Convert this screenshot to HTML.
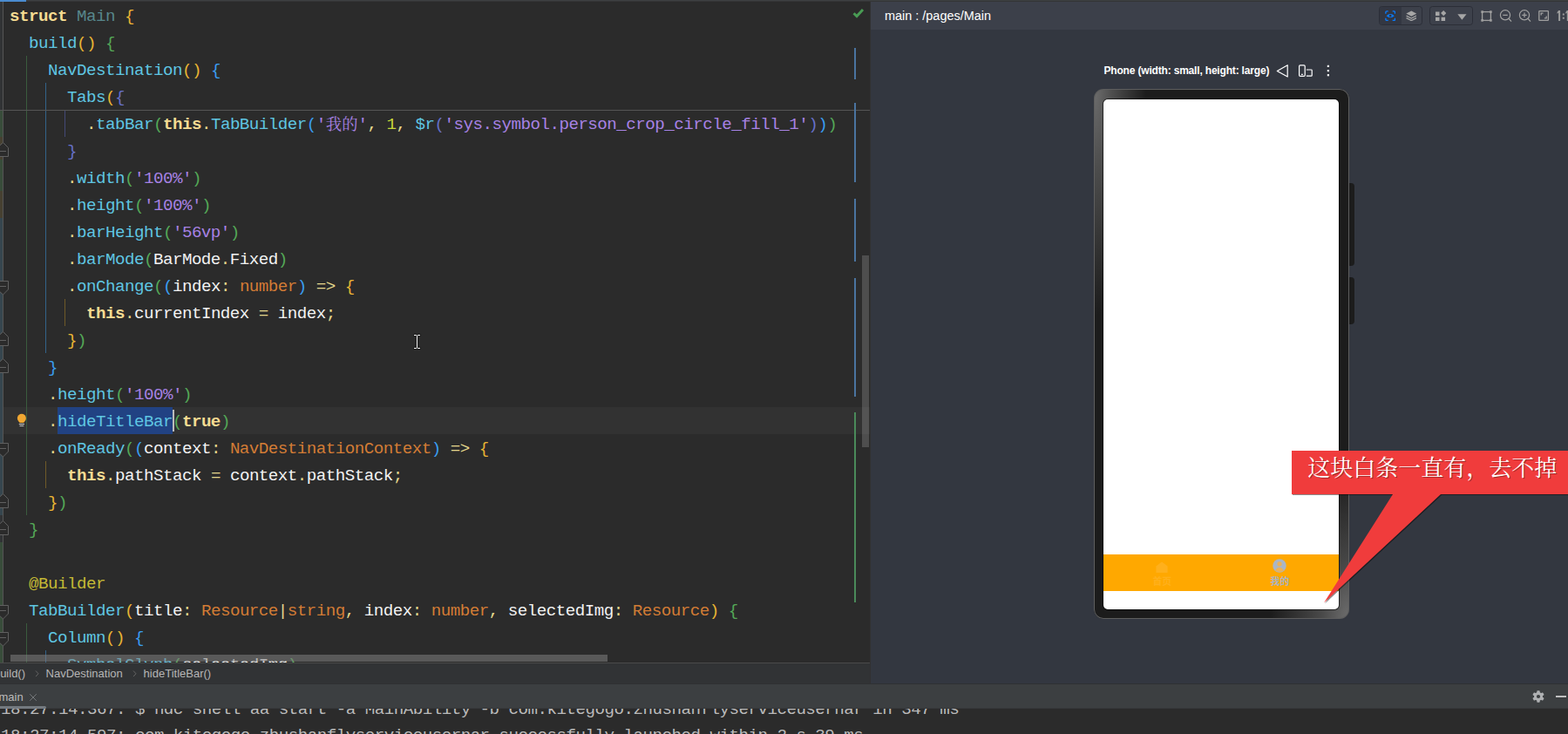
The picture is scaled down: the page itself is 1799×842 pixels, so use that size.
<!DOCTYPE html>
<html><head><meta charset="utf-8"><title>DevEco Studio</title>
<style>
html,body{margin:0;padding:0;}
body{width:1799px;height:842px;overflow:hidden;background:#2b2b2b;position:relative;font-family:"Liberation Sans",sans-serif;}
.abs{position:absolute}
#editor{position:absolute;left:0;top:0;width:998px;height:760px;background:#2b2b2b;overflow:hidden}
.ln{position:absolute;left:11px;height:31px;line-height:31px;white-space:pre;font-family:"Liberation Mono",monospace;font-size:19.2px;color:#cfcfcf;letter-spacing:-0.5219px}
.k{color:#f6dc92;font-weight:bold}
.i{color:#5fc6e2}
.w{color:#f2f2f2}
.t{color:#d37c35}
.s{color:#a782e4}
.n{color:#c6d83a}
.o{color:#e6d88c}
.d{color:#e6d88c}
.u{color:#57878c}
.a{color:#c4ba35}
.b1{color:#e8b434}
.b2{color:#54a857}
.b3{color:#3a9df0}
.b4{color:#6670c8}
.cj{display:inline-block;position:relative;width:36.67px;height:31px;vertical-align:top;overflow:visible;font-family:"Liberation Serif","Noto Serif CJK SC",serif;font-size:18.33px;letter-spacing:0;line-height:31px;color:#a782e4;white-space:pre}
#right{position:absolute;left:999px;top:2px;width:800px;height:782px;background:#333740;overflow:hidden}
</style></head><body>
<div id="editor">
  <div class="abs" style="left:0;top:0;width:3px;height:760px;background:#313335"></div>
  <div style="position:absolute;left:0;top:127px;width:3px;height:30px;background:#384d3a"></div><div style="position:absolute;left:0;top:157px;width:3px;height:26px;background:#474131"></div><div style="position:absolute;left:0;top:183px;width:3px;height:36px;background:#384d3a"></div><div style="position:absolute;left:0;top:219px;width:3px;height:31px;background:#474131"></div><div style="position:absolute;left:0;top:250px;width:3px;height:341px;background:#36464f"></div><div style="position:absolute;left:0;top:622px;width:3px;height:138px;background:#384d3a"></div>
  <div class="abs" style="left:3px;top:0;width:1px;height:760px;background:#555"></div>
  <div class="abs" style="left:4px;top:467px;width:994px;height:31px;background:#323232"></div>
  <div class="abs" style="left:66px;top:467px;width:132px;height:31px;background:#214283"></div>
  <div style="position:absolute;left:30px;top:64px;width:1px;height:527px;background:#3a5c3e"></div><div style="position:absolute;left:52px;top:95px;width:1px;height:310px;background:#33638a"></div><div style="position:absolute;left:74px;top:127px;width:1px;height:30px;background:#434977"></div><div style="position:absolute;left:74px;top:343px;width:1px;height:31px;background:#6e5a28"></div><div style="position:absolute;left:52px;top:529px;width:1px;height:31px;background:#6e5a28"></div><div style="position:absolute;left:30px;top:715px;width:1px;height:45px;background:#3a5c3e"></div><div style="position:absolute;left:52px;top:746px;width:1px;height:14px;background:#33638a"></div>
  <div class="abs" style="left:0;top:126px;width:998px;height:1px;background:#555"></div>
  <div class="ln" style="top:4.4px"><span class="k">struct</span><span class="d"> </span><span class="u">Main</span><span class="d"> </span><span class="b1">{</span></div>
<div class="ln" style="top:35.4px"><span class="d">  </span><span class="i">build</span><span class="b1">()</span><span class="d"> </span><span class="b2">{</span></div>
<div class="ln" style="top:66.4px"><span class="d">    </span><span class="i">NavDestination</span><span class="b1">()</span><span class="d"> </span><span class="b3">{</span></div>
<div class="ln" style="top:97.4px"><span class="d">      </span><span class="i">Tabs</span><span class="b1">(</span><span class="b4">{</span></div>
<div class="ln" style="top:128.4px"><span class="d">        .</span><span class="i">tabBar</span><span class="b2">(</span><span class="k">this</span><span class="d">.</span><span class="i">TabBuilder</span><span class="b3">(</span><span class="s">&#x27;</span><span class="cj">我的</span><span class="s">&#x27;</span><span class="o">,</span><span class="d"> </span><span class="n">1</span><span class="o">,</span><span class="d"> </span><span class="i">$r</span><span class="b4">(</span><span class="s">&#x27;sys.symbol.person_crop_circle_fill_1&#x27;</span><span class="b4">)</span><span class="b3">)</span><span class="b2">)</span></div>
<div class="ln" style="top:159.4px"><span class="d">      </span><span class="b4">}</span></div>
<div class="ln" style="top:190.4px"><span class="d">      .</span><span class="i">width</span><span class="b2">(</span><span class="s">&#x27;100%&#x27;</span><span class="b2">)</span></div>
<div class="ln" style="top:221.4px"><span class="d">      .</span><span class="i">height</span><span class="b2">(</span><span class="s">&#x27;100%&#x27;</span><span class="b2">)</span></div>
<div class="ln" style="top:252.4px"><span class="d">      .</span><span class="i">barHeight</span><span class="b2">(</span><span class="s">&#x27;56vp&#x27;</span><span class="b2">)</span></div>
<div class="ln" style="top:283.4px"><span class="d">      .</span><span class="i">barMode</span><span class="b2">(</span><span class="w">BarMode</span><span class="o">.</span><span class="w">Fixed</span><span class="b2">)</span></div>
<div class="ln" style="top:314.4px"><span class="d">      .</span><span class="i">onChange</span><span class="b2">(</span><span class="b3">(</span><span class="w">index</span><span class="o">:</span><span class="d"> </span><span class="t">number</span><span class="b3">)</span><span class="d"> </span><span class="o">=&gt;</span><span class="d"> </span><span class="b1">{</span></div>
<div class="ln" style="top:345.4px"><span class="d">        </span><span class="k">this</span><span class="o">.</span><span class="w">currentIndex</span><span class="d"> </span><span class="o">=</span><span class="d"> </span><span class="w">index</span><span class="o">;</span></div>
<div class="ln" style="top:376.4px"><span class="d">      </span><span class="b1">}</span><span class="b2">)</span></div>
<div class="ln" style="top:407.4px"><span class="d">    </span><span class="b3">}</span></div>
<div class="ln" style="top:438.4px"><span class="d">    .</span><span class="i">height</span><span class="b2">(</span><span class="s">&#x27;100%&#x27;</span><span class="b2">)</span></div>
<div class="ln" style="top:469.4px"><span class="d">    .</span><span class="i">hideTitleBar</span><span class="b2">(</span><span class="k">true</span><span class="b2">)</span></div>
<div class="ln" style="top:500.4px"><span class="d">    .</span><span class="i">onReady</span><span class="b2">(</span><span class="b3">(</span><span class="w">context</span><span class="o">:</span><span class="d"> </span><span class="t">NavDestinationContext</span><span class="b3">)</span><span class="d"> </span><span class="o">=&gt;</span><span class="d"> </span><span class="b1">{</span></div>
<div class="ln" style="top:531.4px"><span class="d">      </span><span class="k">this</span><span class="o">.</span><span class="w">pathStack</span><span class="d"> </span><span class="o">=</span><span class="d"> </span><span class="w">context</span><span class="o">.</span><span class="w">pathStack</span><span class="o">;</span></div>
<div class="ln" style="top:562.4px"><span class="d">    </span><span class="b1">}</span><span class="b2">)</span></div>
<div class="ln" style="top:593.4px"><span class="d">  </span><span class="b2">}</span></div>
<div class="ln" style="top:624.4px"></div>
<div class="ln" style="top:655.4px"><span class="d">  </span><span class="a">@Builder</span></div>
<div class="ln" style="top:686.4px"><span class="d">  </span><span class="i">TabBuilder</span><span class="b1">(</span><span class="w">title</span><span class="o">:</span><span class="d"> </span><span class="t">Resource</span><span class="o">|</span><span class="t">string</span><span class="o">,</span><span class="d"> </span><span class="w">index</span><span class="o">:</span><span class="d"> </span><span class="t">number</span><span class="o">,</span><span class="d"> </span><span class="w">selectedImg</span><span class="o">:</span><span class="d"> </span><span class="t">Resource</span><span class="b1">)</span><span class="d"> </span><span class="b2">{</span></div>
<div class="ln" style="top:717.4px"><span class="d">    </span><span class="i">Column</span><span class="b1">()</span><span class="d"> </span><span class="b3">{</span></div>
<div class="ln" style="top:748.4px"><span class="d">      </span><span class="i">SymbolGlyph</span><span class="b2">(</span><span class="w">selectedImg</span><span class="b2">)</span></div>
  <div class="abs" style="left:198px;top:470px;width:2px;height:25px;background:#bbbbbb"></div>
  <svg class="abs" style="left:0;top:0" width="14" height="760" viewBox="0 0 14 760" fill="none" stroke-width="1"><path d="M-3 169.5L3.5 163.5L9.5 169.5V179.5H-3Z" fill="#2b2b2b" stroke="#606060"/><path d="M0 173.5H7" stroke="#606060"/><path d="M-3 322.5H9.5V332L3.5 338L-3 332Z" fill="#2b2b2b" stroke="#606060"/><path d="M0 328.5H7" stroke="#606060"/><path d="M-3 386.5L3.5 380.5L9.5 386.5V396.5H-3Z" fill="#2b2b2b" stroke="#606060"/><path d="M0 390.5H7" stroke="#606060"/><path d="M-3 417.5L3.5 411.5L9.5 417.5V427.5H-3Z" fill="#2b2b2b" stroke="#606060"/><path d="M0 421.5H7" stroke="#606060"/><path d="M-3 508.5H9.5V518L3.5 524L-3 518Z" fill="#2b2b2b" stroke="#606060"/><path d="M0 514.5H7" stroke="#606060"/><path d="M-3 572.5L3.5 566.5L9.5 572.5V582.5H-3Z" fill="#2b2b2b" stroke="#606060"/><path d="M0 576.5H7" stroke="#606060"/><path d="M-3 603.5L3.5 597.5L9.5 603.5V613.5H-3Z" fill="#2b2b2b" stroke="#606060"/><path d="M0 607.5H7" stroke="#606060"/><path d="M-3 694.5H9.5V704L3.5 710L-3 704Z" fill="#2b2b2b" stroke="#606060"/><path d="M0 700.5H7" stroke="#606060"/><path d="M-3 725.5H9.5V735L3.5 741L-3 735Z" fill="#2b2b2b" stroke="#606060"/><path d="M0 731.5H7" stroke="#606060"/></svg>
  <svg class="abs" style="left:18px;top:474px" width="14" height="18" viewBox="0 0 14 18"><circle cx="6.900" cy="5.800" r="5" fill="#f0a732"/><path d="M3.300 8.500L4.500 11H9.300L10.500 8.500Z" fill="#f0a732"/><path d="M3.800 12.500h6.200M4.500 14.600h4.800" stroke="#cfcfcf" stroke-width="1"/></svg>
  <div style="position:absolute;left:980px;top:55px;width:2px;height:36px;background:#4a74a0"></div><div style="position:absolute;left:980px;top:118px;width:2px;height:91px;background:#4a74a0"></div><div style="position:absolute;left:980px;top:228px;width:2px;height:72px;background:#4a74a0"></div><div style="position:absolute;left:980px;top:319px;width:2px;height:136px;background:#4a74a0"></div><div style="position:absolute;left:980px;top:473px;width:2px;height:218px;background:#4a8a5a"></div>
  <div class="abs" style="left:989px;top:293px;width:8px;height:220px;background:rgba(255,255,255,.17)"></div>
  <div class="abs" style="left:12px;top:751px;width:685px;height:8px;background:rgba(128,128,128,.55)"></div>
  <svg class="abs" style="left:978px;top:9px" width="14" height="12" viewBox="0 0 14 12"><path d="M1.5 6.2L5 9.6L12 2" fill="none" stroke="#499c54" stroke-width="2.900"/></svg>
  <svg class="abs" style="left:473px;top:382px" width="11" height="20" viewBox="473 382 11 20" shape-rendering="crispEdges"><g fill="#2b2b2b" stroke="#1f1f1f" stroke-width="1.600"><rect x="475" y="384" width="7" height="1"/><rect x="475" y="399" width="7" height="1"/><rect x="478" y="384" width="1" height="16"/></g><g fill="#f4f4f4"><rect x="475" y="384" width="3" height="1"/><rect x="479" y="384" width="3" height="1"/><rect x="475" y="399" width="3" height="1"/><rect x="479" y="399" width="3" height="1"/><rect x="478" y="385" width="1" height="14"/></g></svg>
</div>
<div class="abs" style="left:998px;top:2px;width:1px;height:782px;background:#313131"></div>
<!-- top strip -->
<div class="abs" style="left:0;top:0;width:1799px;height:2px;background:linear-gradient(#3d4042 0,#3d4042 1px,#343536 1px,#343536 2px)"></div>
<div class="abs" style="left:0;top:0;width:30px;height:2px;background:#4a8bcf"></div>

<div id="right">
  <div class="abs" style="left:0;top:0;width:800px;height:32px;background:#3c404a"></div>
  <div class="abs" style="left:16px;top:7px;font-size:14.45px;line-height:18px;color:#fff;white-space:pre">main : /pages/Main</div>
  <!-- toolbar group 1 : coords relative to #right (x-999, y-2) -->
  <div class="abs" style="left:583px;top:5px;width:48px;height:20px;border-radius:3.500px;background:#3d414b;border:1px solid #2b2e37;overflow:hidden"><div style="width:24.500px;height:20px;background:#333742"></div></div>
  <svg class="abs" style="left:589.800px;top:9.900px" width="12.400" height="12.400" viewBox="0 0 14 14" fill="none" stroke="#0a7cff" stroke-width="1.500"><path d="M1 4.200V2.400Q1 1 2.400 1H4.200M9.800 1h1.800Q13 1 13 2.400V4.200M13 9.800v1.800Q13 13 11.600 13H9.800M4.200 13H2.400Q1 13 1 11.600V9.800"/><path d="M1.800 7Q7 2.300 12.200 7Q7 11.700 1.800 7Z" fill="#0a7cff" stroke="none"/><circle cx="7" cy="7" r="1.500" fill="#333742" stroke="none"/></svg>
  <svg class="abs" style="left:613.600px;top:9.600px" width="12.600" height="12.800" viewBox="0 0 14 14"><path d="M7 .4L13.600 3.900L7 7.400L.4 3.900Z" fill="#a6a6a6"/><path d="M.6 6.700L7 10L13.400 6.700M.6 9.500L7 12.800L13.400 9.500" fill="none" stroke="#a6a6a6" stroke-width="1.400"/></svg>
  <!-- toolbar group 2 -->
  <div class="abs" style="left:641px;top:5px;width:48px;height:20px;border-radius:3.500px;background:#3d414b;border:1px solid #2b2e37"></div>
  <svg class="abs" style="left:647.600px;top:10px" width="12.400" height="12.200" viewBox="0 0 12.400 12.200" fill="#a6a6a6"><rect x="0" y="1.500" width="4.500" height="4.500"/><rect x="0" y="7.700" width="4.500" height="4.500"/><rect x="6.600" y="7.700" width="4.500" height="4.500"/><path d="M9.200 0L12.300 3.100L9.200 6.200L6.100 3.100Z"/></svg>
  <svg class="abs" style="left:672.600px;top:13.500px" width="11" height="8" viewBox="0 0 11 8"><path d="M.3 .3H10.500L5.400 6.700Z" fill="#a6a6a6"/></svg>
  <!-- other icons -->
  <svg class="abs" style="left:699.500px;top:9.500px" width="13" height="13" viewBox="0 0 13 13" fill="none" stroke="#a0a0a0"><rect x="1.600" y="1.600" width="9.800" height="9.800" stroke-width="1.300"/><g fill="#a0a0a0" stroke="none"><rect x=".3" y=".3" width="2.600" height="2.600"/><rect x="10.100" y=".3" width="2.600" height="2.600"/><rect x=".3" y="10.100" width="2.600" height="2.600"/><rect x="10.100" y="10.100" width="2.600" height="2.600"/></g></svg>
  <svg class="abs" style="left:720.900px;top:8px" width="16" height="16" viewBox="0 0 16 16" fill="none" stroke="#a0a0a0" stroke-width="1.200"><circle cx="7" cy="7.300" r="5.600"/><path d="M4.300 7.300h5.400M11.200 11.500L14 14.600"/></svg>
  <svg class="abs" style="left:742.800px;top:8px" width="16" height="16" viewBox="0 0 16 16" fill="none" stroke="#a0a0a0" stroke-width="1.200"><circle cx="7" cy="7.300" r="5.600"/><path d="M4.300 7.300h5.400M7 4.600v5.400M11.200 11.500L14 14.600"/></svg>
  <svg class="abs" style="left:765px;top:9px" width="14" height="14" viewBox="0 0 14 14" fill="none" stroke="#a0a0a0" stroke-width="1.300"><rect x="1.800" y="1.700" width="10.600" height="10.700" rx=".6"/><path d="M4.200 6.400V4.100H6.500M10.200 7.600V9.900H7.900"/></svg>
  <svg class="abs" style="left:786px;top:9px" width="14" height="14" viewBox="1785 11 14 14" fill="#9c9c9c"><path d="M1788.100 12H1790.100V24H1788.100V14.800L1786.600 15.800V14.100Z"/><rect x="1792.800" y="15.500" width="2" height="2"/><rect x="1792.800" y="19.700" width="2" height="2"/><path d="M1797.800 12H1799.800V24H1797.800V14.800L1796.300 15.800V14.100Z"/></svg>

  <!-- device label -->
  <div class="abs" style="left:267.500px;top:71px;font-size:12px;font-weight:bold;letter-spacing:-.18px;line-height:16px;color:#fff;white-space:pre">Phone (width: small, height: large)</div>
  <svg class="abs" style="left:465px;top:71px" width="16" height="18" viewBox="0 0 16 18"><path d="M1.300 8.400L13.200 1.700V15.100Z" fill="none" stroke="#fff" stroke-width="1.200" stroke-linejoin="round"/></svg>
  <svg class="abs" style="left:490px;top:71px" width="19" height="18" viewBox="0 0 19 18" fill="none" stroke="#fff" stroke-width="1.200"><rect x="1.600" y="1.800" width="6.600" height="12.600" rx="1.200"/><path d="M4 12.300h1.800"/><path d="M9.900 7h5.500q.8 0 .8 .8v5.600q0 .8-.8 .8H9.900"/></svg>
  <svg class="abs" style="left:523px;top:72px" width="4" height="16" viewBox="0 0 4 16" fill="#fff"><rect x=".8" y=".8" width="2.200" height="2.200"/><rect x=".8" y="6" width="2.200" height="2.200"/><rect x=".8" y="11.100" width="2.200" height="2.200"/></svg>

  <!-- phone: coordinates relative to #right (left 999, top 2) -->
  <div class="abs" style="left:549px;top:208px;width:6px;height:95px;border-radius:0 4px 4px 0;background:#1c1c1c"></div>
  <div class="abs" style="left:549px;top:316px;width:6px;height:54px;border-radius:0 4px 4px 0;background:#1c1c1c"></div>
  <div class="abs" style="left:256px;top:100px;width:293px;height:608px;border-radius:11px;background:
     radial-gradient(ellipse 60px 260px at 0 0, #6e6e6e 0%, rgba(110,110,110,.6) 35%, rgba(60,60,60,0) 100%),
     radial-gradient(ellipse 90px 170px at 100% 100%, #6e6e6e 0%, rgba(110,110,110,.55) 35%, rgba(60,60,60,0) 100%),
     #1c1c1c;box-shadow:inset 0 0 0 1px #5e5e5e"></div>
  <div class="abs" style="left:267px;top:112px;width:270px;height:585px;border-radius:5px;background:#fff;overflow:hidden;box-shadow:0 0 0 1px rgba(0,0,0,.6)">
     <div class="abs" style="left:0;top:522px;width:270px;height:42px;background:#ffa800"></div>
     <svg class="abs" style="left:60.300px;top:529.500px" width="14" height="13.500" viewBox="0 0 14 13.500"><path d="M7 .4L13.600 5.600V12.300Q13.600 13.300 12.600 13.300H1.400Q.4 13.300 .4 12.300V5.600Z" fill="#ffb01c"/></svg>
     <svg class="abs" style="left:194.400px;top:526.700px" width="16" height="16" viewBox="0 0 14 14"><circle cx="7" cy="7" r="6.800" fill="#aab6c6"/><circle cx="7" cy="5.200" r="2.300" fill="#e9b25c"/><path d="M2.600 11.600Q7 5.600 11.400 11.600Q7 14.800 2.600 11.600Z" fill="#e9b25c"/></svg>
  </div>
</div>
<div class="abs" style="left:1457.6px;top:662.2px;width:21.6px;height:10.8px;font-family:'Liberation Sans','Noto Sans CJK SC',sans-serif;font-size:10.8px;font-weight:bold;line-height:10.8px;color:#a9b4c4;white-space:pre">我的</div>
<div class="abs" style="left:1322.4px;top:662.2px;width:21.6px;height:10.8px;font-family:'Liberation Sans','Noto Sans CJK SC',sans-serif;font-size:10.8px;font-weight:bold;line-height:10.8px;color:#ffb01c;white-space:pre">首页</div>

<!-- callout -->
<svg class="abs" style="left:1470px;top:505px;filter:drop-shadow(1px 1px 0.6px rgba(0,0,0,.45))" width="329" height="200" viewBox="1470 505 329 200"><path d="M1482 517H1800V567H1653L1519 691.500L1598 567H1482Z" fill="#f03c3c"/></svg>
<div class="abs" style="left:1500.3px;top:525px;width:286px;height:26px;font-family:'Liberation Serif','Noto Serif CJK SC',serif;font-size:26px;line-height:26px;color:#ffffff;white-space:pre;text-shadow:1px 1px 0 rgba(90,20,20,.55)">这块白条一直有，去不掉</div>

<!-- breadcrumbs -->
<div class="abs" style="left:0;top:760px;width:998px;height:25px;background:#313335"></div>
<div class="abs" style="left:0;top:760px;width:998px;height:1px;background:#4a4a4a"></div>
<div class="abs" style="left:-7.1px;top:764px;font-size:13px;line-height:17px;color:#b6b6b6;white-space:pre" id="bc1">build()</div>
<div class="abs" style="left:52.6px;top:764px;font-size:13px;line-height:17px;color:#b6b6b6;white-space:pre" id="bc2">NavDestination</div>
<div class="abs" style="left:164.6px;top:764px;font-size:13px;line-height:17px;color:#b6b6b6;white-space:pre" id="bc3">hideTitleBar()</div>
<svg class="abs" style="left:39px;top:768px" width="7" height="10" viewBox="0 0 7 10"><path d="M2 1.500L5 4.800L2 8.100" fill="none" stroke="#646464" stroke-width="1"/></svg>
<svg class="abs" style="left:151px;top:768px" width="7" height="10" viewBox="0 0 7 10"><path d="M2 1.500L5 4.800L2 8.100" fill="none" stroke="#646464" stroke-width="1"/></svg>
<!-- tab bar -->
<div class="abs" style="left:0;top:784px;width:1799px;height:1px;background:#2f3133"></div>
<div class="abs" style="left:0;top:785px;width:1799px;height:27px;background:#3c3f41"></div>
<div class="abs" style="left:-1.500px;top:790.700px;font-size:13px;line-height:17px;color:#bbbbbb;white-space:pre" id="tabmain">main</div>
<svg class="abs" style="left:33px;top:795px" width="10" height="10" viewBox="0 0 10 10"><path d="M1.200 1.200L8.800 8.800M8.800 1.200L1.200 8.800" stroke="#74777a" stroke-width="1"/></svg>
<svg class="abs" style="left:1758px;top:792px" width="14" height="14" viewBox="0 0 14 14"><g fill="#afb1b3"><circle cx="7" cy="7" r="5"/><rect x="5.300" y=".3" width="3.400" height="13.400" rx=".7"/><rect x="5.300" y=".3" width="3.400" height="13.400" rx=".7" transform="rotate(60 7 7)"/><rect x="5.300" y=".3" width="3.400" height="13.400" rx=".7" transform="rotate(120 7 7)"/></g><circle cx="7" cy="7" r="2.100" fill="#3c3f41"/></svg>
<div class="abs" style="left:1785px;top:798px;width:12px;height:2px;background:#c0c0c0"></div>
<!-- console -->
<div class="abs" style="left:0;top:812px;width:1799px;height:30px;background:#2b2b2b;overflow:hidden">
  <div style="position:absolute;left:1px;top:-13.500px;font-family:'Liberation Mono',monospace;font-size:19.2px;letter-spacing:-0.5219px;line-height:31px;color:#bbbbbb;white-space:pre">18:27:14.367: $ hdc shell aa start -a MainAbility -b com.kitegogo.zhushanflyserviceusernar in 347 ms</div>
  <div style="position:absolute;left:1px;top:16.500px;font-family:'Liberation Mono',monospace;font-size:19.2px;letter-spacing:-0.5219px;line-height:31px;color:#bbbbbb;white-space:pre">18:27:14.597: com.kitegogo.zhushanflyserviceusernar successfully launched within 2 s 39 ms</div>
</div>
<div class="abs" style="left:0;top:812px;width:1799px;height:1px;background:#36383a"></div>
<div class="abs" style="left:0;top:810px;width:53px;height:3px;background:#747a80;border-radius:0 2px 2px 0"></div>
</body></html>
